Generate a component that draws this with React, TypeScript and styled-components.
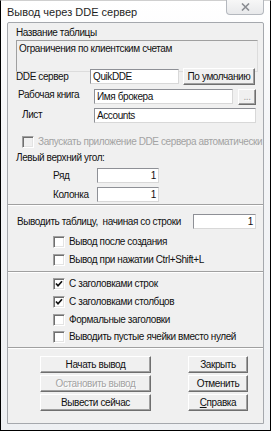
import React from "react";
import styled, { createGlobalStyle } from "styled-components";

const Global = createGlobalStyle`
  html, body { margin: 0; padding: 0; background: #ffffff; }
  body { font-family: "Liberation Sans", Arial, sans-serif; font-size: 10px; letter-spacing: -0.4px; color: #111; }
  * { box-sizing: border-box; }
`;

const Window = styled.div`
  width: 271px;
  height: 431px;
  border: 1px solid #000;
  border-top: 1px solid #cfcfcf;
  background: linear-gradient(180deg, #ffffff 0%, #f4f5f7 30%, #eef0f3 100%);
  display: flex;
  flex-direction: column;
  padding: 0 6px 6px 6px;
`;

const TitleBar = styled.div`
  height: 21px;
  display: flex;
  align-items: flex-start;
  justify-content: space-between;
  flex-shrink: 0;
`;

const Title = styled.span`
  font-family: "Liberation Sans", Arial, sans-serif;
  font-size: 11px;
  letter-spacing: 0;
  color: #1e1e1e;
  margin-top: 5px;
`;

const CloseButton = styled.div`
  width: 38px;
  height: 15px;
  margin-top: -1px;
  border: 1px solid #b4b8be;
  border-top: none;
  border-radius: 0 0 4px 4px;
  background: linear-gradient(180deg, #f7f7f7, #e8e9eb);
  display: flex;
  align-items: center;
  justify-content: center;
`;

const Client = styled.div`
  flex: 1;
  background: #f0f0f0;
  border: 1px solid #a5a8ad;
  border-radius: 2px 2px 0 0;
  display: flex;
  flex-direction: column;
`;

const Section = styled.div<{ $h: number; $last?: boolean }>`
  height: ${(p) => p.$h}px;
  flex-shrink: 0;
  border-bottom: ${(p) => (p.$last ? "none" : "1px solid #a0a0a0")};
  box-shadow: ${(p) => (p.$last ? "none" : "0 1px 0 #ffffff")};
  margin-bottom: ${(p) => (p.$last ? 0 : 1)}px;
  display: flex;
  flex-direction: column;
  padding-left: 8px;
  padding-right: 5px;
`;

const Row = styled.div<{ $top: number; $h?: number; $indent?: number }>`
  display: flex;
  align-items: center;
  margin-top: ${(p) => p.$top}px;
  height: ${(p) => p.$h ?? 15}px;
  padding-left: ${(p) => p.$indent ?? 0}px;
  flex-shrink: 0;
`;

const Label = styled.span<{ $w?: number; $dim?: boolean; $shift?: number }>`
  width: ${(p) => (p.$w ? `${p.$w}px` : "auto")};
  flex-shrink: 0;
  white-space: nowrap;
  color: ${(p) => (p.$dim ? "#a3a3a3" : "#111")};
  position: relative;
  top: ${(p) => p.$shift ?? 0}px;
`;

const ReadOnlyBox = styled.div`
  margin-top: 1px;
  height: 32px;
  width: 242px;
  border: 1px solid #a0a0a0;
  border-right-color: #dcdcdc;
  border-bottom-color: #dcdcdc;
  background: #f0f0f0;
  padding: 1px 2px;
  line-height: 13px;
  flex-shrink: 0;
`;

const Input = styled.div<{ $w: number; $right?: boolean }>`
  width: ${(p) => p.$w}px;
  height: 15px;
  background: #fff;
  border: 1px solid #8e9096;
  border-right-color: #d8d8d8;
  border-bottom-color: #d8d8d8;
  padding: 0 2px;
  line-height: 13px;
  text-align: ${(p) => (p.$right ? "right" : "left")};
  flex-shrink: 0;
  white-space: nowrap;
  overflow: hidden;
`;

const Button = styled.div<{ $w: number; $h?: number; $disabled?: boolean; $gap?: number }>`
  width: ${(p) => p.$w}px;
  height: ${(p) => p.$h ?? 17}px;
  margin-left: ${(p) => p.$gap ?? 0}px;
  background: #f0f0f0;
  border: 1px solid;
  border-color: #ffffff #6f6f6f #6f6f6f #ffffff;
  box-shadow: inset -1px -1px 0 #a0a0a0;
  display: flex;
  align-items: center;
  justify-content: center;
  color: ${(p) => (p.$disabled ? "#a3a3a3" : "#111")};
  text-shadow: ${(p) => (p.$disabled ? "1px 1px 0 #ffffff" : "none")};
  flex-shrink: 0;
  white-space: nowrap;
`;

const Box = styled.div<{ $dim?: boolean }>`
  width: 12px;
  height: 12px;
  flex-shrink: 0;
  background: ${(p) => (p.$dim ? "#f0f0f0" : "#fff")};
  border: 1px solid;
  border-color: #a0a0a0 #ffffff #ffffff #a0a0a0;
  box-shadow: inset 1px 1px 0 #6f6f6f, inset -1px -1px 0 #e3e3e3;
  display: flex;
  align-items: center;
  justify-content: center;
  margin-right: 4px;
`;

const ButtonGrid = styled.div`
  display: grid;
  grid-template-columns: 111px 60px;
  column-gap: 37px;
  row-gap: 2px;
  margin-top: 7px;
  padding-left: 24px;
`;

const Check = () => (
  <svg width="8" height="8" viewBox="0 0 8 8">
    <path d="M1 3.5 L3 5.8 L7 1.2" stroke="#111" strokeWidth="1.7" fill="none" />
  </svg>
);

const CheckRow: React.FC<{ top: number; indent: number; checked?: boolean; dim?: boolean; text: string }> = ({
  top,
  indent,
  checked,
  dim,
  text,
}) => (
  <Row $top={top} $h={13} $indent={indent}>
    <Box $dim={dim}>{checked && <Check />}</Box>
    <Label $dim={dim}>{text}</Label>
  </Row>
);

export default function App() {
  return (
    <>
      <Global />
      <Window>
        <TitleBar>
          <Title>Вывод через DDE сервер</Title>
          <CloseButton>
            <svg width="9" height="8" viewBox="0 0 9 8">
              <path d="M1 0.5 L8 7.5 M8 0.5 L1 7.5" stroke="#8a8d92" strokeWidth="1.6" />
            </svg>
          </CloseButton>
        </TitleBar>
        <Client>
          <Section $h={182}>
            <Row $top={3} $h={13}>
              <Label>Название таблицы</Label>
            </Row>
            <ReadOnlyBox>Ограничения по клиентским счетам</ReadOnlyBox>
            <Row $top={-4} $h={17}>
              <Label $w={74}>DDE сервер</Label>
              <Input $w={89}>QuikDDE</Input>
              <Button $w={72} $gap={4}>По умолчанию</Button>
            </Row>
            <Row $top={3} $h={17} $indent={2}>
              <Label $w={76} $shift={-2}>Рабочая книга</Label>
              <Input $w={139}>Имя брокера</Input>
              <Button $w={18} $h={16} $gap={5} $disabled>...</Button>
            </Row>
            <Row $top={3} $h={15} $indent={6}>
              <Label $w={72} $shift={-1}>Лист</Label>
              <Input $w={162}>Accounts</Input>
            </Row>
            <CheckRow top={12} indent={6} dim text="Запускать приложение DDE сервера автоматически" />
            <Row $top={3} $h={13}>
              <Label>Левый верхний угол:</Label>
            </Row>
            <Row $top={4} $h={15} $indent={37}>
              <Label $w={44}>Ряд</Label>
              <Input $w={62} $right>1</Input>
            </Row>
            <Row $top={4} $h={15} $indent={37}>
              <Label $w={44}>Колонка</Label>
              <Input $w={62} $right>1</Input>
            </Row>
          </Section>
          <Section $h={66}>
            <Row $top={8} $h={15} $indent={1}>
              <Label $w={176}>Выводить таблицу,&nbsp; начиная со строки</Label>
              <Input $w={63} $right>1</Input>
            </Row>
            <CheckRow top={6} indent={37} text="Вывод после создания" />
            <CheckRow top={5} indent={37} text="Вывод при нажатии Ctrl+Shift+L" />
          </Section>
          <Section $h={75}>
            <CheckRow top={4} indent={37} checked text="С заголовками строк" />
            <CheckRow top={5} indent={37} checked text="С заголовками столбцов" />
            <CheckRow top={5} indent={37} text="Формальные заголовки" />
            <CheckRow top={4} indent={37} text="Выводить пустые ячейки вместо нулей" />
          </Section>
          <Section $h={70} $last>
            <ButtonGrid>
              <Button $w={111}>Начать вывод</Button>
              <Button $w={60}>Закрыть</Button>
              <Button $w={111} $disabled>Остановить вывод</Button>
              <Button $w={60}>Отменить</Button>
              <Button $w={111}>Вывести сейчас</Button>
              <Button $w={60}>
                <u>С</u>правка
              </Button>
            </ButtonGrid>
          </Section>
        </Client>
      </Window>
    </>
  );
}
